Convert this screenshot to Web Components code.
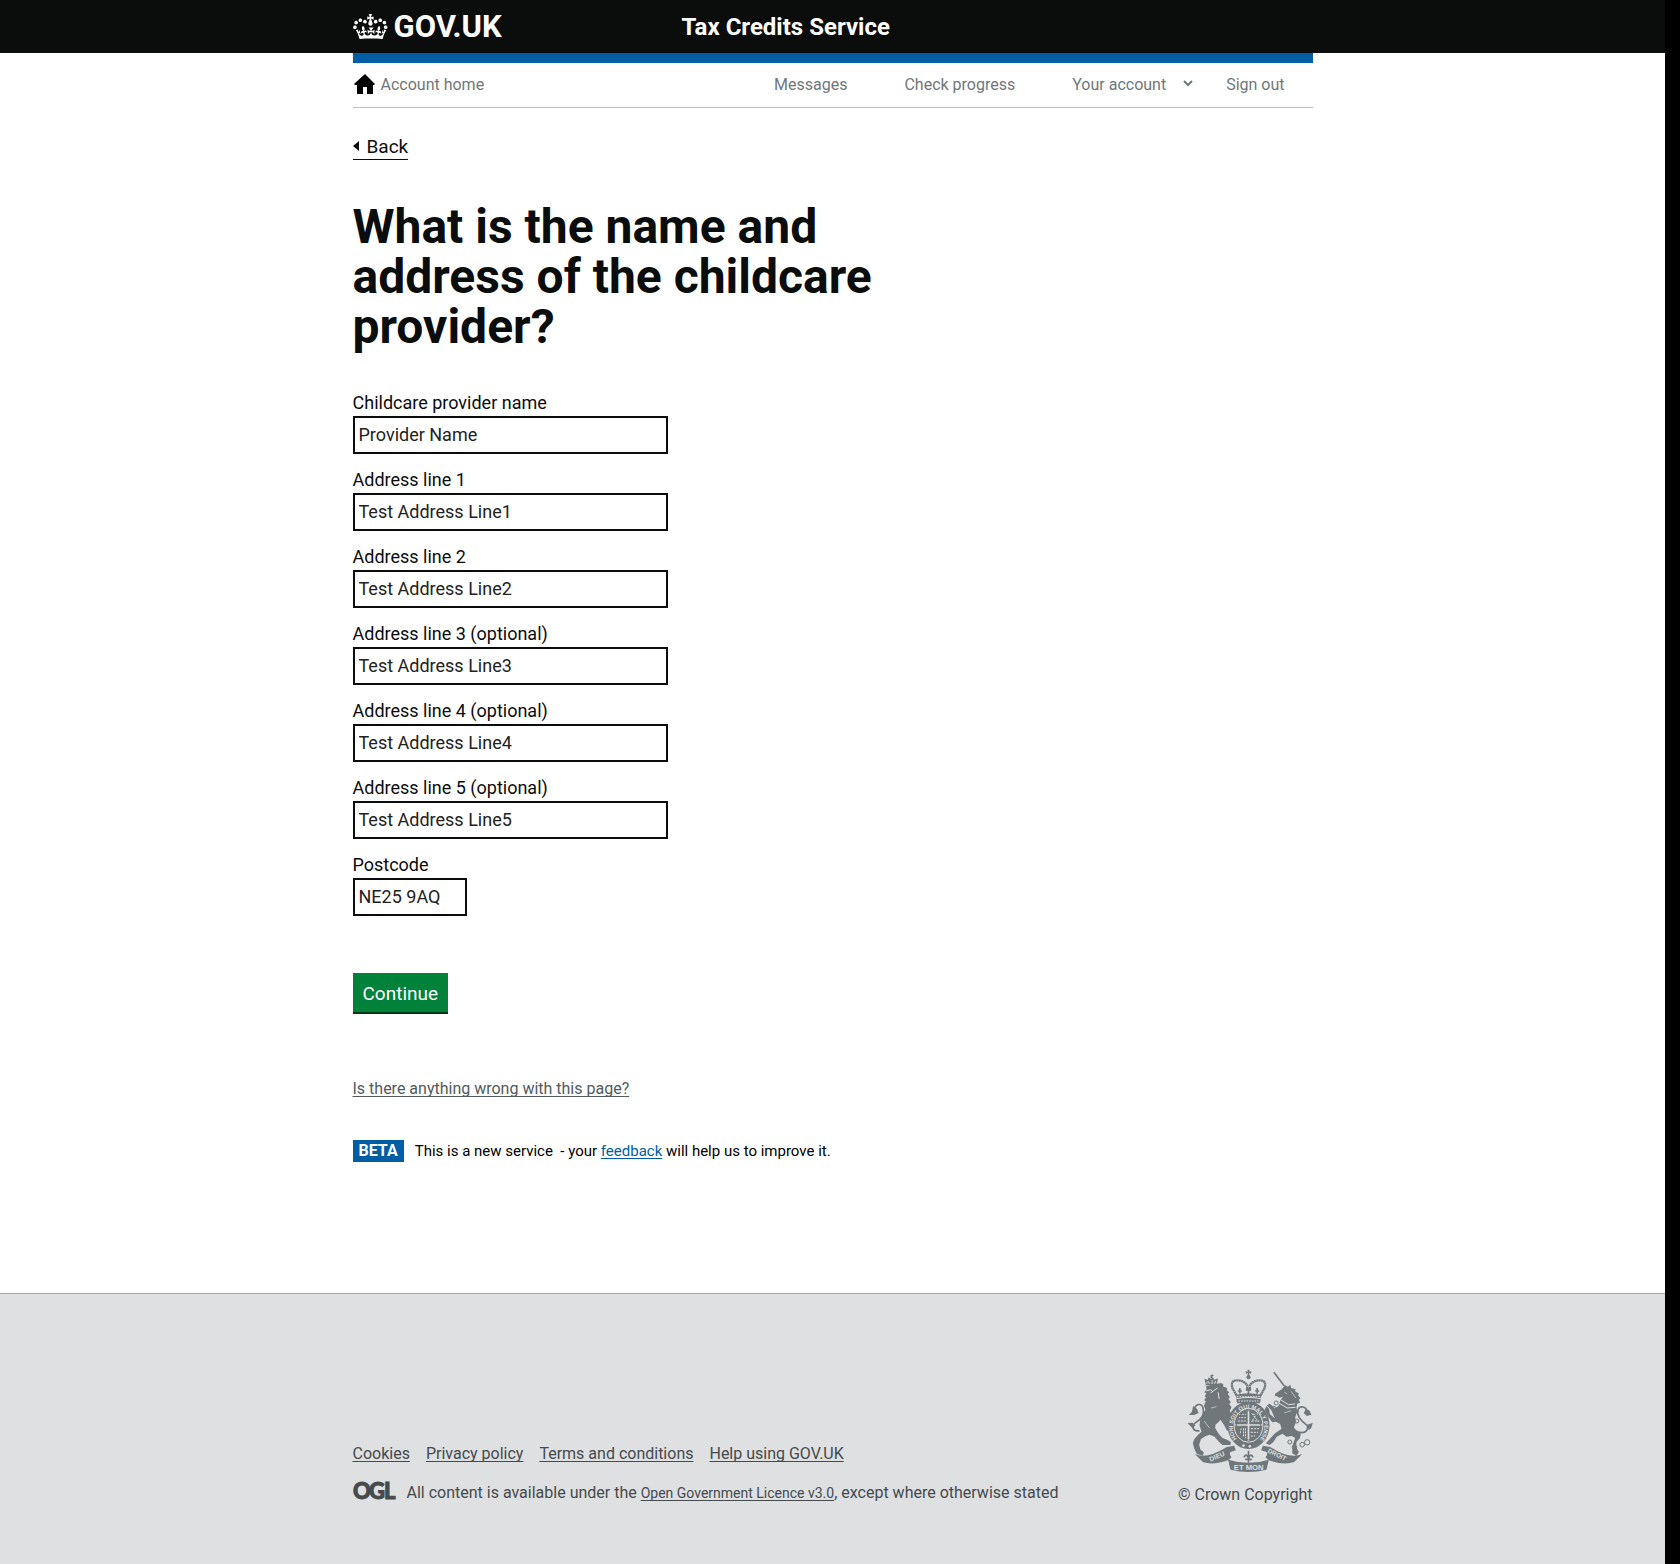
<!DOCTYPE html>
<html lang="en">
<head>
<meta charset="utf-8">
<title>What is the name and address of the childcare provider?</title>
<style>
html { background: #000; min-height: 100%; display: grid; }
body { margin: 0 15px 0 0; display: flex; flex-direction: column; background: #fff; color: #0b0c0c; font: 19px/25px Roboto, "Liberation Sans", sans-serif; }
main { flex: 1; padding-bottom: 130px; }
.intro { max-width: 540px; }
</style>
</head>
<body>
<tc-header service="Tax Credits Service"></tc-header>
<tc-nav></tc-nav>
<main>
<tc-container>
<tc-back href="#">Back</tc-back>
<tc-heading class="intro">What is the name and address of the childcare provider?</tc-heading>
<tc-form>
<tc-field label="Childcare provider name" value="Provider Name"></tc-field>
<tc-field label="Address line 1" value="Test Address Line1"></tc-field>
<tc-field label="Address line 2" value="Test Address Line2"></tc-field>
<tc-field label="Address line 3 (optional)" value="Test Address Line3"></tc-field>
<tc-field label="Address line 4 (optional)" value="Test Address Line4"></tc-field>
<tc-field label="Address line 5 (optional)" value="Test Address Line5"></tc-field>
<tc-field label="Postcode" value="NE25 9AQ" size="short"></tc-field>
<tc-button slot="action">Continue</tc-button>
</tc-form>
<tc-help></tc-help>
<tc-phase tag="BETA"></tc-phase>
</tc-container>
</main>
<tc-footer></tc-footer>

<script>
function define(name, html, setup) {
  const template = document.createElement('template');
  template.innerHTML = '<style>:host{display:block}*{box-sizing:border-box}svg{display:block;flex:none;overflow:visible}</style>' + html;
  customElements.define(name, class extends HTMLElement {
    constructor() {
      super();
      this.attachShadow({ mode: 'open' }).append(template.content.cloneNode(true));
    }
    connectedCallback() { if (setup) setup(this, this.shadowRoot); }
  });
}

define('tc-container', `<style>:host{width:100%;max-width:960px;margin:0 auto}</style><slot></slot>`);

define('tc-crown', `<style>:host{width:35px}</style>
<svg viewBox="0 4 36 27" width="35" height="26" fill="#fff" aria-hidden="true"><path d="M6.7 12.2c1 .4 2.1-.1 2.5-1s-.1-2.1-1-2.5c-1-.4-2.1.1-2.5 1-.4 1 0 2.1 1 2.5m-4.3 2.5c1 .4 2.1-.1 2.5-1s-.1-2.1-1-2.5c-1-.4-2.1.1-2.5 1-.5 1 0 2.1 1 2.5m-1.3 4.8c1 .4 2.1-.1 2.5-1 .4-1-.1-2.1-1-2.5-1-.4-2.1.1-2.5 1-.4 1 0 2.1 1 2.5m10.4-5.8c1 .4 2.1-.1 2.5-1s-.1-2.1-1-2.5c-1-.4-2.1.1-2.5 1s0 2.1 1 2.5m17.4-1.5c-1 .4-2.1-.1-2.5-1s.1-2.1 1-2.5c1-.4 2.1.1 2.5 1 .5 1 0 2.1-1 2.5m4.3 2.5c-1 .4-2.1-.1-2.5-1s.1-2.1 1-2.5c1-.4 2.1.1 2.5 1 .5 1 0 2.1-1 2.5m1.3 4.8c-1 .4-2.1-.1-2.5-1-.4-1 .1-2.1 1-2.5 1-.4 2.1.1 2.5 1 .4 1 0 2.1-1 2.5m-10.4-5.8c-1 .4-2.1-.1-2.5-1s.1-2.1 1-2.5c1-.4 2.1.1 2.5 1s0 2.1-1 2.5m-5.3-4.9 2.4 1.3V6.5l-2.4.8c-.1-.1-.1-.2-.2-.2s1-3 1-3h-3.4l1 3c-.1.1-.2.1-.2.2-.1.1-2.4-.7-2.4-.7v3.5L17 8.8c.1.1.1.2.2.3l-1.4 4.2c-.1.2-.1.4-.1.6 0 1.1.8 2 1.9 2.2h.7c1-.2 1.9-1.1 1.9-2.1 0-.2 0-.4-.1-.6l-1.4-4.2c-.1-.2 0-.3.1-.4m-1 20.3c4.6 0 8.9.3 12.8.9 1.1-4.6 2.4-7.2 3.8-9.1l-2.6-.9c.3 1.3.3 1.9 0 2.8-.4-.4-.8-1.1-1.1-2.4l-1.2 4.2c.8-.5 1.4-.9 2-.9-1.2 2.6-2.7 3.1-3.6 3-1.2-.2-1.7-1.3-1.5-2.2.3-1.3 1.6-1.6 2.2-.2 1.2-2.4-.8-3.1-2.1-2.4 1.9-1.9 2.2-3.6.6-5.7-2.2 1.7-2.2 3.3-1.2 5.6-1.3-1.5-3.3-.7-2.5 1.7.9-1.4 2.1-.5 2 .8-.2 1.2-1.7 2.1-3.6 1.9-2.8-.2-2.9-2.2-2.9-3.6.7-.1 1.9.5 3 2.3l.4-4.8c-1.1 1.2-2.2 1.4-3.4 1.4.4-1.3 2.5-3.4 2.5-3.4h-5.5s2 2.1 2.4 3.4c-1.2 0-2.3-.3-3.4-1.4l.4 4.8c1.1-1.8 2.3-2.4 3-2.3 0 1.3-.1 3.3-2.9 3.6-1.8.2-3.3-.7-3.6-1.9-.1-1.3 1.1-2.2 2-.8.8-2.4-1.2-3.2-2.5-1.7 1-2.3 1-3.9-1.2-5.6-1.6 2.1-1.3 3.8.6 5.7-1.3-.7-3.3 0-2.1 2.4.6-1.4 1.9-1.1 2.2.2.2.9-.3 2.1-1.5 2.2-.9.1-2.4-.4-3.6-3 .6.1 1.2.4 2 .9l-1.2-4.2c-.3 1.3-.7 2-1.1 2.4-.3-.9-.3-1.5 0-2.8l-2.6.9c1.4 1.9 2.7 4.5 3.8 9.1 3.9-.6 8.2-.9 12.8-.9"/></svg>`);

define('tc-header', `<style>
:host{background:#0b0c0c;color:#fff}
.row{display:grid;grid-template-columns:329px 1fr;align-items:center;height:53px}
a{color:inherit;text-decoration:none;font-weight:700}
.logo{display:flex;align-items:center;gap:6px;font-size:31px;line-height:30px}
.service{font-size:24px;line-height:30px}
</style>
<header><tc-container><div class="row"><a class="logo" href="#"><tc-crown></tc-crown><span>GOV.UK</span></a><a class="service" href="#"></a></div></tc-container></header>`,
(el, root) => { root.querySelector('.service').textContent = el.getAttribute('service'); });

define('tc-nav', `<style>
nav{border-top:10px solid #005ea5;border-bottom:1px solid #bfc1c3;display:flex;justify-content:space-between;align-items:center;height:55px;font-size:16px;line-height:20px}
a,button{color:#6f777b;text-decoration:none;display:flex;align-items:center}
button{border:0;background:none;padding:0;font:inherit;gap:17px;margin-right:-24px}
.home{gap:5px}
.links{display:flex;gap:57px;padding-right:28px}
</style>
<tc-container><nav aria-label="Account">
<a class="home" href="#"><svg width="23" height="22" viewBox="0 0 23 22" aria-hidden="true"><path fill="#000" d="M12 0 22 10 21 11H20V20H14V13H10V20H4V11H2L1 10Z"/></svg>Account home</a>
<div class="links"><a href="#">Messages</a><a href="#">Check progress</a>
<button type="button" aria-haspopup="true">Your account<svg width="10" height="12" viewBox="0 0 10 12" aria-hidden="true"><path d="M1 2 5 6 9 2" fill="none" stroke="#6f777b" stroke-width="2"/></svg></button>
<a href="#">Sign out</a></div></nav></tc-container>`);

define('tc-back', `<style>
:host{padding-top:24px}
a{display:inline-flex;align-items:center;gap:8px;color:#0b0c0c;text-decoration:none;border-bottom:1px solid #0b0c0c}
</style><a href="#"><svg width="6" height="10" viewBox="0 0 6 10" aria-hidden="true"><path d="M0 5 6 0V10Z" fill="#0b0c0c"/></svg><slot></slot></a>`);

define('tc-heading', `<style>:host{padding-top:42px}h1{margin:0;font-size:48px;line-height:50px;font-weight:700}</style><h1><slot></slot></h1>`);

define('tc-form', `<style>
:host{padding-top:40px}
form{display:flex;flex-direction:column;align-items:flex-start}
.fields{display:flex;flex-direction:column;gap:15px;padding-bottom:57px}
</style><form><div class="fields"><slot></slot></div><slot name="action"></slot></form>`);

define('tc-field', `<style>
:host{font-size:18px}
label{display:block;line-height:22px;padding-bottom:2px}
input{display:block;width:315px;height:38px;border:2px solid #0b0c0c;border-radius:0;background:#fff;color:#222;font:inherit;padding:2px 4px;margin:0;outline:0}
:host([size=short]) input{width:114px}
</style><label for="control"></label><input id="control" type="text">`,
(el, root) => {
  root.querySelector('label').textContent = el.getAttribute('label');
  root.querySelector('input').value = el.getAttribute('value');
});

define('tc-button', `<style>button{display:block;border:0;border-radius:0;background:#00823b;color:#fff;box-shadow:0 2px 0 #003618;font:inherit;padding:8px 10px 6px;margin:0}</style><button type="button"><slot></slot></button>`);

define('tc-help', `<style>:host{padding-top:67px;font-size:16px;line-height:20px}a{color:#505a5f;text-underline-offset:2px;text-decoration-skip-ink:none}</style><a href="#">Is there anything wrong with this page?</a>`);

define('tc-phase', `<style>
:host{padding-top:41px;font-size:15px;line-height:20px;color:#000}
p{margin:0;display:flex;align-items:center;gap:11px}
strong{background:#005ea5;color:#fff;padding:1px 6px;font-size:16px}
a{color:#005ea5;text-underline-offset:2px}
span{white-space:pre-wrap}
</style><p><strong></strong><span>This is a new service  - your <a href="#">feedback</a> will help us to improve it.</span></p>`,
(el, root) => { root.querySelector('strong').textContent = el.getAttribute('tag'); });

define('tc-ogl', `<svg width="44" height="20" viewBox="0 0 44 20" role="img" aria-label="OGL"><text x="0 16 31" y="16" font-family="Lato" font-weight="900" font-size="22" fill="#454a4d" stroke="#454a4d" stroke-width="1">OGL</text></svg>`);

/* The royal arms: lion, crowned garter and shield, unicorn, motto ribbon. */
define('tc-crest', `<svg width="126" height="103" viewBox="83 55 377 309" aria-hidden="true" font-family="Liberation Sans" font-weight="700">
<g fill="#6f777b" stroke="none">
<path d="M139 104 135 84 144 88 148 80 154 85 160 80 165 87 175 83 172 103Z"/>
<path d="M153 73H157V70H159V73H162V76H159V82H153Z"/>
<path d="M140 106 158 102 184 97 192 101 190 107 203 112 202 119 209 125 205 130 211 140 207 145 214 155 209 160 216 170 211 180 215 190 208 200 222 222 226 240 217 233 219 246 207 236 203 242 195 225 183 207 177 214 168 222 167 232 178 250 189 262 203 267 214 274 213 283 189 283 178 273 165 258 150 252 137 257 124 266 119 282 123 297 133 305 130 315 112 310 105 296 100 278 104 266 116 252 126 243 120 224 123 203 132 187 138 177 133 165 139 152 134 149 140 140 135 137 141 128 134 125 141 117Z"/>
<path d="M101 166 113 175 117 187 104 193 88 193 97 184ZM84 217 99 216 108 224 99 233Z"/>
<path d="M376 103 385 108 392 102 395 112 409 116 406 121 419 129 415 134 423 143 418 147 422 156 413 159 411 170 413 184 407 200 409 216 403 230 411 240 424 249 421 263 411 274 410 289 418 304 411 315 398 308 400 282 407 262 397 256 381 258 369 249 352 258 341 275 330 283 319 278 333 263 345 249 366 234 362 220 349 213 338 215 323 194 315 178 321 166 329 175 331 190 346 203 335 178 322 164 331 159 346 173 357 166 363 148 371 138 359 141 352 136 347 137 346 130 358 122 371 111Z"/>
<path d="M438 176 449 179 456 192 442 196 433 188ZM444 222 460 216 455 233 447 239Z"/>
<path d="M228 133Q267 123 306 133L303 143Q267 135 231 143ZM230 146Q267 138 304 146L301 158H233Z"/>
<path d="M264 57H270L269 63 275 61V69L269 67 270 76H264L265 67 259 69V61L265 63Z"/><circle cx="267" cy="80" r="6"/>
<ellipse cx="267" cy="224" rx="63" ry="71"/>
<path d="M106 310Q140 327 202 289L224 285 229 299 213 304Q208 310 216 320L208 328Q160 345 130 334ZM428 310Q392 327 332 289L310 285 305 299 321 304Q326 310 318 320L326 328Q374 345 404 334ZM206 327Q267 346 328 327L321 357Q267 371 213 357Z"/>
</g>
<g fill="none" stroke="#6f777b" stroke-width="5">
<path d="M120 240C100 244 94 226 108 216C127 205 136 193 130 170C126 157 109 159 105 175"/>
<path d="M409 241C434 252 448 242 443 224C424 210 409 194 416 176C421 164 440 168 442 180"/>
<path d="M343 65 374 105"/>
<path d="M231 134 219 113Q212 91 230 89Q252 88 263 104V120M303 134 315 113Q322 91 304 89Q282 88 271 104V120" stroke-width="7" stroke-dasharray="6 1"/>
</g>
<g fill="none" stroke="#dee0e2" stroke-width="3">
<ellipse cx="267" cy="224" rx="43" ry="51"/>
<path d="M140 121 153 117 160 123M153 127 174 112M176 125 179 145M363 147 387 162 407 160M356 156 383 172 408 170"/>
<path d="M267 177V271M227 223H307" stroke-width="5"/>
<path d="M232 138H302M237 151H297M139 97H172M145 91 148 98M158 88V98M168 91 166 98" stroke-dasharray="5 3"/>
<path d="M238 191H259M236 201H259M235 211H259M275 234H300M274 245H296M274 256H287M277 188 296 213M293 189 276 213M245 233 242 249M252 233V257M258 233V263M280 191H294M277 211H300" stroke-dasharray="6 3"/>
<path d="M355 118 367 116M374 124 383 130M395 122 409 142M155 172 171 168M134 211 150 232M374 187 395 180" stroke-width="2"/>
</g>
<g fill="none" stroke="#6f777b" stroke-width="3">
<ellipse cx="267" cy="224" rx="36" ry="44"/>
<path d="M267 129V111M259 117H275M241 129V112M235 121H247M293 129V112M287 121H299M267 300V336M253 320Q260 306 266 321M281 320Q274 306 268 321M257 326H277" stroke-width="5"/>
<circle cx="391" cy="274" r="6"/><circle cx="405" cy="290" r="7"/><circle cx="428" cy="282" r="7"/><circle cx="443" cy="275" r="8"/><circle cx="412" cy="211" r="6"/><circle cx="350" cy="157" r="6"/><circle cx="343" cy="172" r="5"/>
</g>
<path id="garter" fill="none" d="M232 265A47 55 0 1 1 302 265"/>
<g fill="#dee0e2"><circle cx="252" cy="285" r="4"/><circle cx="271" cy="287" r="4"/>
<text font-size="17"><textPath href="#garter">HONI SOIT QUI MAL Y PENSE</textPath></text>
<text font-size="23" x="223" y="358">ET MON</text>
<text font-size="20" transform="translate(153 333) rotate(-23)">DIEU</text>
<text font-size="19" transform="translate(323 305) rotate(26)">DROIT</text></g>
</svg>`);

define('tc-footer', `<style>
:host{background:#dee0e2;border-top:1px solid #a1acb2;color:#454a4d;font-size:16px;line-height:20px}
.row{display:flex;justify-content:space-between;align-items:flex-end;padding:75px 0 59px}
a{color:inherit;text-underline-offset:2px;text-decoration-skip-ink:none}
ul{display:flex;gap:16px;list-style:none;margin:0 0 19px;padding:0}
.licence{display:flex;align-items:flex-start;gap:10px;padding-bottom:2px}
p{margin:0}
small{font-size:14px}
.copy{display:flex;flex-direction:column;align-items:flex-end;gap:13px}
.copy a{text-decoration:none}
</style>
<footer><tc-container><div class="row"><div>
<ul><li><a href="#">Cookies</a></li><li><a href="#">Privacy policy</a></li><li><a href="#">Terms and conditions</a></li><li><a href="#">Help using GOV.UK</a></li></ul>
<div class="licence"><tc-ogl></tc-ogl><p>All content is available under the <small><a href="#">Open Government Licence v3.0</a></small>, except where otherwise stated</p></div>
</div><div class="copy"><tc-crest></tc-crest><a href="#">© Crown Copyright</a></div></div></tc-container></footer>`);
</script>
</body>
</html>
